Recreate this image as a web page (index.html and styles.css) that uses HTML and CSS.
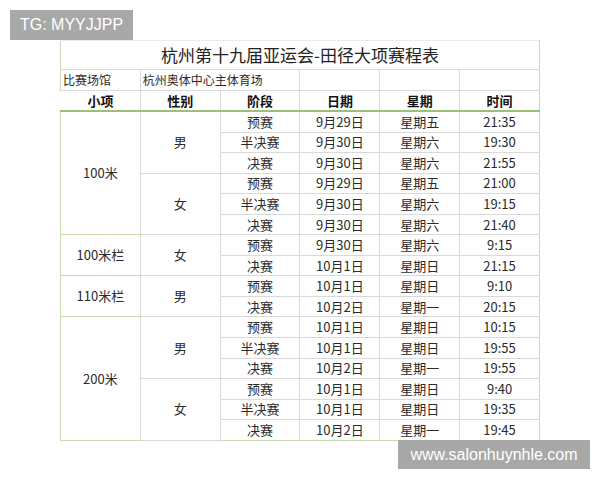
FILE: index.html
```html
<!DOCTYPE html>
<html lang="zh-CN">

<head>
  <meta charset="UTF-8">
  <meta name="viewport" content="width=device-width, initial-scale=1.0">
  <title>杭州第十九届亚运会-田径大项赛程表</title>
  <link rel="stylesheet" href="styles.css">
</head>

<body>
  <div class="tag">TG: MYYJJPP</div>

  <table class="schedule">
    <tr class="title-row">
      <td colspan="6">杭州第十九届亚运会-田径大项赛程表</td>
    </tr>
    <tr class="venue-row">
      <td>比赛场馆</td>
      <td colspan="2">杭州奥体中心主体育场</td>
      <td></td>
      <td></td>
      <td></td>
    </tr>
    <tr class="head-row">
      <th>小项</th>
      <th>性别</th>
      <th>阶段</th>
      <th>日期</th>
      <th>星期</th>
      <th>时间</th>
    </tr>

    <!-- 100米 -->
    <tr>
      <td rowspan="6" class="event">100米</td>
      <td rowspan="3">男</td>
      <td>预赛</td><td>9月29日</td><td>星期五</td><td>21:35</td>
    </tr>
    <tr><td>半决赛</td><td>9月30日</td><td>星期六</td><td>19:30</td></tr>
    <tr><td>决赛</td><td>9月30日</td><td>星期六</td><td>21:55</td></tr>
    <tr>
      <td rowspan="3">女</td>
      <td>预赛</td><td>9月29日</td><td>星期五</td><td>21:00</td>
    </tr>
    <tr><td>半决赛</td><td>9月30日</td><td>星期六</td><td>19:15</td></tr>
    <tr><td>决赛</td><td>9月30日</td><td>星期六</td><td>21:40</td></tr>

    <!-- 100米栏 -->
    <tr>
      <td rowspan="2" class="event">100米栏</td>
      <td rowspan="2">女</td>
      <td>预赛</td><td>9月30日</td><td>星期六</td><td>9:15</td>
    </tr>
    <tr><td>决赛</td><td>10月1日</td><td>星期日</td><td>21:15</td></tr>

    <!-- 110米栏 -->
    <tr>
      <td rowspan="2" class="event">110米栏</td>
      <td rowspan="2">男</td>
      <td>预赛</td><td>10月1日</td><td>星期日</td><td>9:10</td>
    </tr>
    <tr><td>决赛</td><td>10月2日</td><td>星期一</td><td>20:15</td></tr>

    <!-- 200米 -->
    <tr>
      <td rowspan="6" class="event">200米</td>
      <td rowspan="3">男</td>
      <td>预赛</td><td>10月1日</td><td>星期日</td><td>10:15</td>
    </tr>
    <tr><td>半决赛</td><td>10月1日</td><td>星期日</td><td>19:55</td></tr>
    <tr><td>决赛</td><td>10月2日</td><td>星期一</td><td>19:55</td></tr>
    <tr>
      <td rowspan="3">女</td>
      <td>预赛</td><td>10月1日</td><td>星期日</td><td>9:40</td>
    </tr>
    <tr><td>半决赛</td><td>10月1日</td><td>星期日</td><td>19:35</td></tr>
    <tr><td>决赛</td><td>10月2日</td><td>星期一</td><td>19:45</td></tr>
  </table>

  <div class="site">www.salonhuynhle.com</div>
</body>

</html>
```

FILE: styles.css
```css
body {
  margin: 0;
  background-color: #fff;
  color: #2a2a2a;
  font-family: "Noto Sans CJK SC", sans-serif;
}

.tag {
  display: inline-block;
  margin: 10px 0 0 10px;
  height: 30px;
  padding: 0 10px;
  line-height: 30px;
  background-color: #a8a8a8;
  color: #fff;
  font-family: "Liberation Sans", sans-serif;
  font-size: 16px;
  vertical-align: top;
}

.site {
  position: absolute;
  left: 398px;
  top: 440px;
  width: 192px;
  height: 29px;
  line-height: 29px;
  text-align: center;
  background-color: #a8a8a8;
  color: #fff;
  font-family: "Liberation Sans", sans-serif;
  font-size: 16px;
}

.schedule {
  margin-left: 60px;
  width: 480px;
  border-collapse: collapse;
  table-layout: fixed;
  font-size: 13px;
}

.schedule td,
.schedule th {
  width: 80px;
  height: 19.55px;
  padding: 0;
  border: 1px solid #d9d9d9;
  text-align: center;
  line-height: 18px;
  white-space: nowrap;
  overflow: visible;
}

.title-row td {
  height: 28px;
  font-size: 17px;
  color: #222;
  border-top-color: #ececec;
}

.venue-row td {
  height: 20px;
  font-size: 12px;
  text-align: left;
  padding-left: 2px;
}

.head-row th {
  height: 19px;
  font-size: 13px;
  font-weight: bold;
  color: #111;
  border-bottom: 2px solid #9cc078;
}

.head-row th:first-child {
  border-left-color: #fff;
}

.schedule tr td:first-child {
  border-left-color: #c6dcae;
}

.schedule tr td:last-child,
.schedule tr th:last-child {
  border-right-color: #c6dcae;
}

.schedule tr:last-child td,
.schedule td.event {
  border-bottom-color: #c6dcae;
}
```
